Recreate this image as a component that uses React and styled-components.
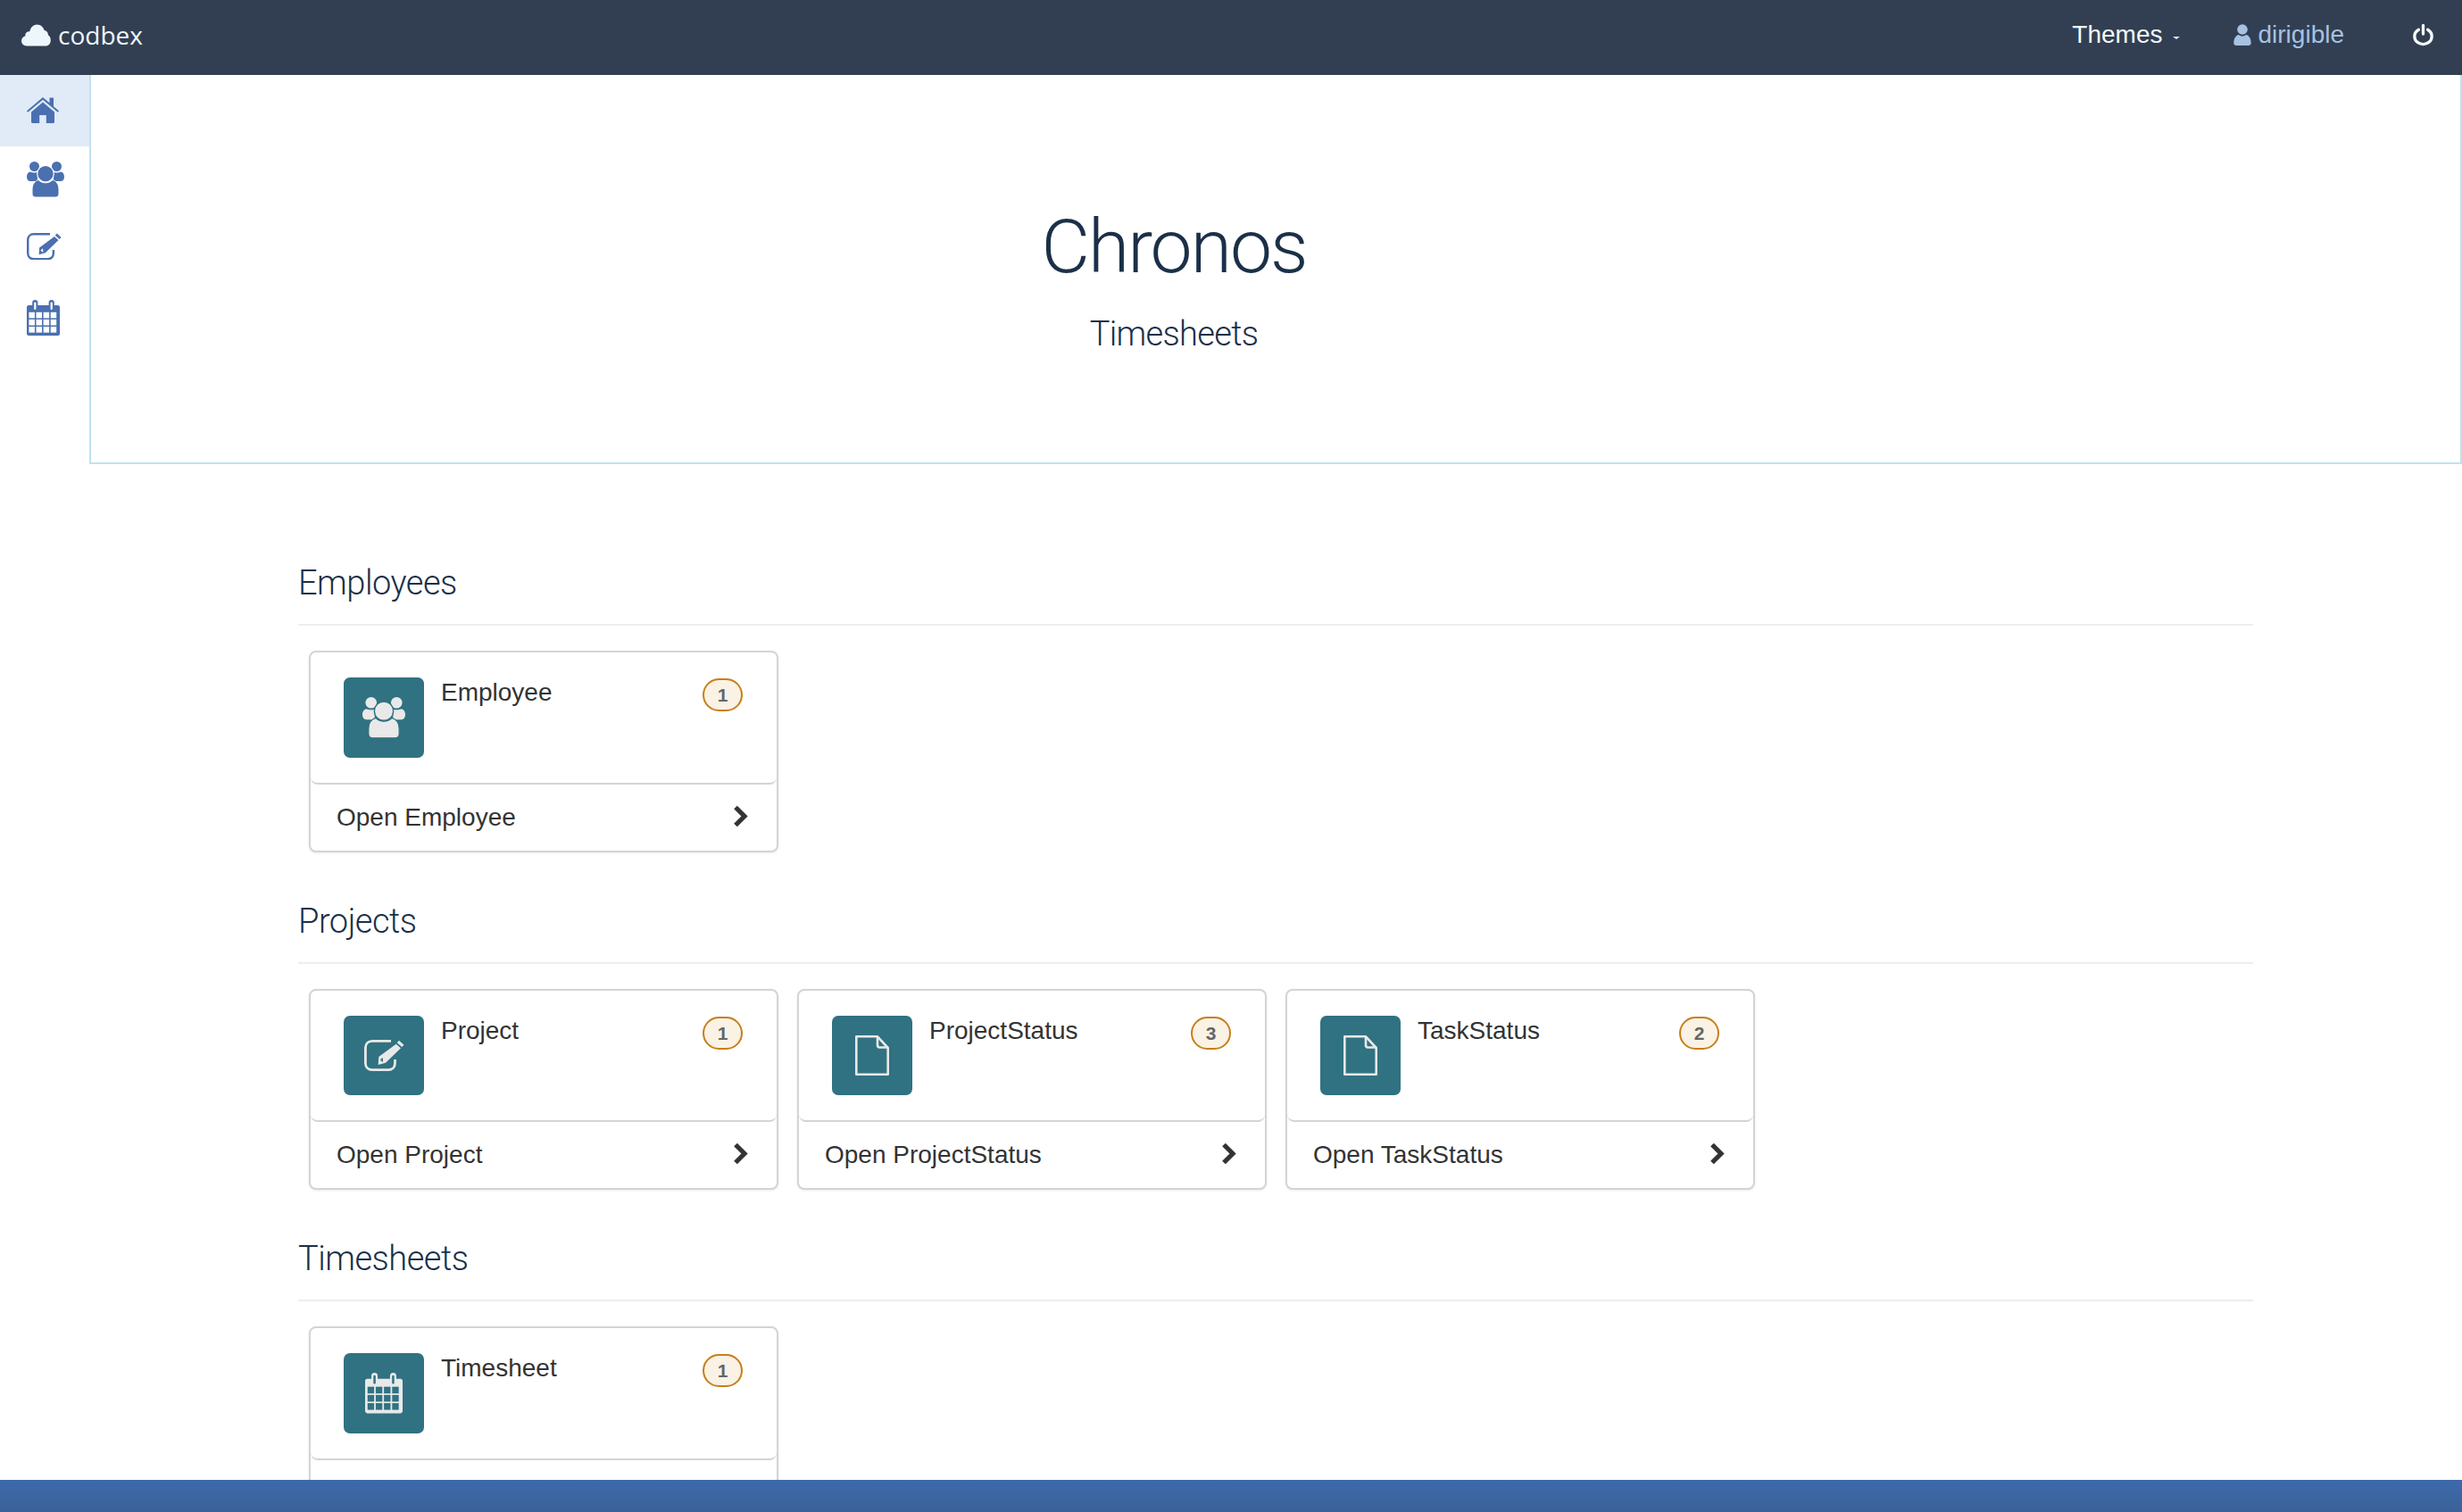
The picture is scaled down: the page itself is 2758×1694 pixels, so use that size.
import React from 'react';
import styled, { createGlobalStyle } from 'styled-components';

const GlobalStyle = createGlobalStyle`
  html, body { margin: 0; padding: 0; height: 100%; background: #fff; }
  body { font-family: "Liberation Sans", Arial, sans-serif; color: #333; overflow: hidden; }
  * { box-sizing: border-box; }
`;

const Page = styled.div`
  height: 100vh;
  display: flex;
  flex-direction: column;
  overflow: hidden;
`;

const Navbar = styled.header`
  flex: 0 0 84px;
  display: flex;
  align-items: center;
  background: #323f52;
  color: #fff;
  padding: 0 32px 6px 24px;
  font-size: 28px;
`;

const Brand = styled.a`
  display: flex;
  align-items: center;
  gap: 8px;
  color: #eef6fd;
  font-family: "Open Sans", sans-serif;
  font-size: 28px;
`;

const NavRight = styled.nav`
  margin-left: auto;
  display: flex;
  align-items: center;
`;

const ThemesLink = styled.a`
  display: flex;
  align-items: center;
  gap: 11px;
  color: #f4f8fc;
`;

const Caret = styled.span`
  width: 0;
  height: 0;
  margin-top: 6px;
  border-top: 3px solid #dfe6ee;
  border-left: 4px solid transparent;
  border-right: 4px solid transparent;
`;

const UserLink = styled.a`
  display: flex;
  align-items: center;
  gap: 8px;
  margin-left: 60px;
  color: #a5c2e3;
`;

const PowerLink = styled.a`
  display: flex;
  margin-left: 77px;
`;

const Body = styled.div`
  flex: 1;
  min-height: 0;
  display: grid;
  grid-template-columns: 100px 1fr;
  overflow: hidden;
`;

const Sidebar = styled.aside`
  display: flex;
  flex-direction: column;
`;

const SideItem = styled.a`
  height: ${p => p.$height}px;
  display: flex;
  align-items: flex-start;
  padding: ${p => (p.$active ? 25 : 17)}px 0 0 30px;
  background: ${p => (p.$active ? '#e0ebf7' : 'transparent')};
  color: #4a70b0;
`;

const Main = styled.main`
  min-width: 0;
`;

const Hero = styled.section`
  height: 436px;
  border: 2px solid #c0e2ee;
  border-top: 0;
  padding: 151px 228px 0 0;
  text-align: center;
  color: #1b3048;
  font-family: Roboto, sans-serif;
  font-weight: 300;
`;

const HeroTitle = styled.h1`
  margin: 0;
  font-size: 84px;
  line-height: 84px;
  font-weight: 300;
  letter-spacing: -2px;
`;

const HeroSub = styled.p`
  margin: 33px 0 0;
  font-size: 38px;
  line-height: 44px;
  letter-spacing: -0.7px;
`;

const Content = styled.div`
  padding: 111px 234px 0;
`;

const Section = styled.section`
  margin-bottom: 55px;
`;

const SectionTitle = styled.h2`
  margin: 0 0 28px;
  padding-bottom: 24px;
  border-bottom: 2px solid #eee;
  color: #1b3048;
  font-family: Roboto, sans-serif;
  font-size: 38px;
  line-height: 44px;
  font-weight: 300;
  letter-spacing: -0.5px;
`;

const CardRow = styled.div`
  display: flex;
  gap: 21px;
  padding-left: 12px;
`;

const Card = styled.article`
  width: 526px;
  height: ${p => (p.$short ? 225 : 226)}px;
  display: flex;
  flex-direction: column;
  border: 2px solid #d4d4d4;
  border-radius: 8px;
  box-shadow: 0 1px 3px rgba(0, 0, 0, 0.08);
  background: #fff;
`;

const CardTop = styled.div`
  flex: 0 0 ${p => (p.$short ? 147 : 148)}px;
  display: flex;
  align-items: flex-start;
  padding: 28px 38px 0 37px;
  border-bottom: 2px solid #d4d4d4;
  border-radius: 0 0 8px 8px;
`;

const IconTile = styled.div`
  width: 90px;
  height: ${p => (p.$short ? 89 : 90)}px;
  flex: none;
  display: flex;
  align-items: center;
  justify-content: center;
  border-radius: 7px;
  background: #307282;
  color: #e9e9e9;
`;

const CardTitle = styled.h3`
  margin: -1px 0 0 19px;
  flex: 1;
  font-size: 28px;
  line-height: 36px;
  font-weight: 400;
  color: #333;
`;

const Badge = styled.span`
  width: 45px;
  height: 37px;
  margin-top: 1px;
  display: flex;
  align-items: center;
  justify-content: center;
  border: 2px solid #c77f1a;
  border-radius: 19px;
  background: #faf2e4;
  color: #666;
  font-size: 21px;
  font-weight: 700;
`;

const CardLink = styled.a`
  flex: 1;
  display: flex;
  align-items: center;
  justify-content: space-between;
  padding: 0 32px 0 29px;
  color: #333;
  font-size: 28px;
`;

const Chevron = styled.svg`
  margin-bottom: 3px;
`;

const Footer = styled.footer`
  flex: 0 0 36px;
  background: linear-gradient(#3e6aaa, #3a6199);
`;

const CloudIcon = () => (
  <svg width="33" height="25" viewBox="0 0 33 25" fill="currentColor">
    <path d="M6 24.500C2.500 24.500 0 22 0 18.800C0 16 1.900 13.800 4.500 13.200C4.300 12.600 4.300 12.100 4.400 11.500C4.800 9.200 7 7.800 9.300 8.200C10.400 3.300 13.800 0.500 17.500 0.500C21.500 0.500 24.800 3.400 25.600 7.100C28.300 7.500 30 9.700 29.900 12.300C31.700 13.300 32.800 15.500 32.800 18.200C32.800 22 30.300 24.500 27 24.500Z" />
  </svg>
);

const UserIcon = () => (
  <svg width="20" height="24" viewBox="0 0 21 26" fill="currentColor">
    <circle cx="10.500" cy="6.500" r="6.300" />
    <path d="M0 23C0 17 3 13.500 6 13C7 14 8.700 14.600 10.500 14.600C12.300 14.600 14 14 15 13C18 13.500 21 17 21 23C21 25 19.500 26 18 26H3C1.500 26 0 25 0 23Z" />
  </svg>
);

const PowerIcon = () => (
  <svg width="23" height="26" viewBox="0 0 25 27" fill="none" stroke="#f6f9fc" strokeWidth="3.600" strokeLinecap="round">
    <path d="M7 7.200C3.900 9 2 12 2 15.300C2 21 6.700 25 12.500 25C18.300 25 23 21 23 15.300C23 12 21.100 9 18 7.200" />
    <path d="M12.500 2V12.500" />
  </svg>
);

const HomeIcon = () => (
  <svg width="36" height="29" viewBox="0 0 36 29" fill="currentColor">
    <path d="M5 16.500L18 5.500L31 16.500V27.500C31 28.300 30.500 29 29.500 29H21.800V20H14.200V29H6.500C5.500 29 5 28.300 5 27.500Z" />
    <path d="M18 0L25.500 6.300V0.500H30V10.200L36 15.300L34.800 16.700L18 2.800L1.200 16.700L0 15.300Z" />
  </svg>
);

const UsersIcon = ({ size = 42, gap = '#fff' }) => (
  <svg width={size} height={size * 40 / 42} viewBox="0 0 42 40" fill="currentColor">
    <circle cx="8.500" cy="5.500" r="5.500" />
    <circle cx="33.500" cy="5.500" r="5.500" />
    <path d="M0 17C0 14 1.500 11.800 4 11.500C6 12.500 9 12.800 12 12V22H4C1.500 22 0 20 0 17Z" />
    <path d="M42 17C42 14 40.500 11.800 38 11.500C36 12.500 33 12.800 30 12V22H38C40.500 22 42 20 42 17Z" />
    <path d="M6 31C6 25 9.500 21.500 13 20.500C15 22.500 18 23.800 21 23.800C24 23.800 27 22.500 29 20.500C32.500 21.500 36 25 36 31V36C36 38.500 34.500 40 32 40H10C7.500 40 6 38.500 6 36Z" stroke={gap} strokeWidth="1" />
    <circle cx="21" cy="13.700" r="9.300" stroke={gap} strokeWidth="1.200" />
  </svg>
);

const EditIcon = ({ size = 39, gap = '#fff' }) => (
  <svg width={size} height={size * 35 / 45} viewBox="0 0 45 35" fill="none">
    <path d="M30 1.400H9C4.500 1.400 1.400 4.500 1.400 9V26C1.400 30.500 4.500 33.600 9 33.600H27C31.500 33.600 34.500 30.500 34.500 26V22" stroke="currentColor" strokeWidth="2.800" />
    <path d="M39 0.700L44.500 5.700L42.300 8L36.700 3.300Z" fill="currentColor" />
    <path d="M35.700 4.700L41 9.300L24 25.800L15.700 28L16.300 19Z" fill="currentColor" />
    <path d="M18.200 22.500H20.200V24.500M20.200 22.500V20.500" stroke={gap} strokeWidth="1.600" />
  </svg>
);

const CalendarIcon = ({ size = 37, cell = '#fff' }) => {
  const cells = [];
  for (let row = 0; row < 3; row++) {
    for (let col = 0; col < 4; col++) {
      cells.push(<rect key={`${row}-${col}`} x={2.400 + col * 8.100} y={13.800 + row * 8.100} width="6.500" height="6.600" fill={cell} />);
    }
  }
  return (
    <svg width={size} height={size * 40 / 37} viewBox="0 0 37 40" fill="currentColor">
      <path d="M2 5.900H35C36 5.900 37 6.900 37 7.900V38C37 39 36 40 35 40H2C1 40 0 39 0 38V7.900C0 6.900 1 5.900 2 5.900Z" />
      <rect x="6.200" y="0" width="6.200" height="12" rx="3.100" />
      <rect x="24.600" y="0" width="6.200" height="12" rx="3.100" />
      <rect x="8.200" y="2.500" width="2.200" height="8.500" rx="1.100" fill={cell} />
      <rect x="26.600" y="2.500" width="2.200" height="8.500" rx="1.100" fill={cell} />
      {cells}
    </svg>
  );
};

const FileIcon = () => (
  <svg width="38" height="45" viewBox="0 0 38 45" fill="none" stroke="currentColor" strokeWidth="2.600" strokeLinejoin="round">
    <path d="M1.300 1.300H25L36.700 14V43.700H1.300Z" />
    <path d="M25 1.300V11C25 12.500 26 13.500 27.500 13.500H36.700" />
  </svg>
);

const ChevronIcon = () => (
  <Chevron width="17" height="25" viewBox="0 0 17 25" fill="none" stroke="#333" strokeWidth="5.200">
    <path d="M3 2.500L13 12.500L3 22.500" />
  </Chevron>
);

const sideItems = [
  { key: 'home', height: 80, active: true, icon: <HomeIcon /> },
  { key: 'users', height: 80, icon: <UsersIcon /> },
  { key: 'edit', height: 75, icon: <EditIcon /> },
  { key: 'calendar', height: 80, icon: <CalendarIcon /> },
];

const sections = [
  {
    title: 'Employees',
    cards: [{ name: 'Employee', count: 1, icon: <UsersIcon size={48} gap="#307282" /> }],
  },
  {
    title: 'Projects',
    short: true,
    cards: [
      { name: 'Project', count: 1, icon: <EditIcon size={45} gap="#307282" /> },
      { name: 'ProjectStatus', count: 3, icon: <FileIcon /> },
      { name: 'TaskStatus', count: 2, icon: <FileIcon /> },
    ],
  },
  {
    title: 'Timesheets',
    cards: [{ name: 'Timesheet', count: 1, icon: <CalendarIcon size={42} cell="#307282" /> }],
  },
];

export default function App() {
  return (
    <Page>
      <GlobalStyle />
      <Navbar>
        <Brand><CloudIcon />codbex</Brand>
        <NavRight>
          <ThemesLink>Themes<Caret /></ThemesLink>
          <UserLink><UserIcon />dirigible</UserLink>
          <PowerLink><PowerIcon /></PowerLink>
        </NavRight>
      </Navbar>
      <Body>
        <Sidebar>
          {sideItems.map(item => (
            <SideItem key={item.key} $active={item.active} $height={item.height}>{item.icon}</SideItem>
          ))}
        </Sidebar>
        <Main>
          <Hero>
            <HeroTitle>Chronos</HeroTitle>
            <HeroSub>Timesheets</HeroSub>
          </Hero>
          <Content>
            {sections.map(section => (
              <Section key={section.title}>
                <SectionTitle>{section.title}</SectionTitle>
                <CardRow>
                  {section.cards.map(card => (
                    <Card key={card.name} $short={section.short}>
                      <CardTop $short={section.short}>
                        <IconTile $short={section.short}>{card.icon}</IconTile>
                        <CardTitle>{card.name}</CardTitle>
                        <Badge>{card.count}</Badge>
                      </CardTop>
                      <CardLink>Open {card.name}<ChevronIcon /></CardLink>
                    </Card>
                  ))}
                </CardRow>
              </Section>
            ))}
          </Content>
        </Main>
      </Body>
      <Footer />
    </Page>
  );
}
